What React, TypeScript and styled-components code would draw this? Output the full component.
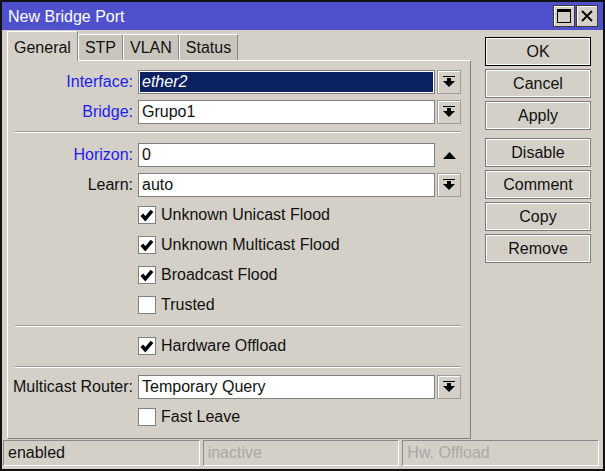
import styled, { createGlobalStyle } from 'styled-components';

const GlobalStyle = createGlobalStyle`
  html, body {
    margin: 0;
    padding: 0;
    background: #d4d0c8;
  }
  body {
    font-family: "Liberation Sans", Arial, sans-serif;
    font-size: 16px;
    color: #111;
  }
  * {
    box-sizing: border-box;
  }
`;

/** window frame **/
const Window = styled.div`
  width: 605px;
  height: 471px;
  border: 2px solid #111;
  background: #d4d0c8;
  display: flex;
  flex-direction: column;
`;

const TitleBar = styled.div`
  height: 28px;
  flex: 0 0 auto;
  background: #4f50cb;
  color: #fff;
  display: flex;
  align-items: center;
  padding: 0 5px 0 6px;
`;

const Title = styled.div`
  flex: 1;
  font-size: 16px;
  padding-top: 1px;
`;

const TitleButtons = styled.div`
  display: flex;
  gap: 1px;
`;

const TitleButton = styled.div`
  width: 22px;
  height: 22px;
  border: 1px solid #3a3a3a;
  background: #d4d0c8;
  box-shadow: inset 1px 1px 0 #fff;
  display: flex;
  align-items: center;
  justify-content: center;
`;

const Body = styled.div`
  flex: 1;
  display: flex;
  padding: 1px 0 0 5px;
  min-height: 0;
`;

/** left side: tabs and form **/
const LeftCol = styled.div`
  width: 464px;
  display: flex;
  flex-direction: column;
`;

const Tabs = styled.div`
  height: 29px;
  display: flex;
  align-items: flex-end;
`;

const Tab = styled.div<{ $active?: boolean }>`
  height: ${({ $active }) => ($active ? '30px' : '26px')};
  margin-bottom: ${({ $active }) => ($active ? '-1px' : '0')};
  position: relative;
  z-index: ${({ $active }) => ($active ? 1 : 0)};
  padding: ${({ $active }) => ($active ? '2px 6px 0' : '0 6px')};
  display: flex;
  align-items: center;
  background: ${({ $active }) => ($active ? '#d4d0c8' : '#c9c5bd')};
  border-top: 1px solid #fff;
  border-left: 1px solid #fff;
  border-right: 1px solid #8a8a8a;
  font-size: 16px;
`;

const Panel = styled.div`
  flex: 1;
  border-top: 1px solid #fff;
  border-left: 1px solid #fff;
  border-right: 1px solid #808080;
  border-bottom: 1px solid #808080;
  padding: 6px 9px 0 0;
  display: flex;
  flex-direction: column;
`;

const Row = styled.div`
  height: 30px;
  display: grid;
  grid-template-columns: 130px 297px 26px;
  align-items: center;
`;

const Label = styled.div<{ $link?: boolean }>`
  text-align: right;
  padding-right: 5px;
  white-space: nowrap;
  color: ${({ $link }) => ($link ? '#1c1cf0' : '#111')};
`;

const Field = styled.div<{ $selected?: boolean }>`
  height: 24px;
  border: 1px solid #808080;
  background: ${({ $selected }) => ($selected ? '#0b2161' : '#fff')};
  box-shadow: ${({ $selected }) => ($selected ? 'inset 0 0 0 1px #fff' : 'none')};
  color: ${({ $selected }) => ($selected ? '#fff' : '#111')};
  font-style: ${({ $selected }) => ($selected ? 'italic' : 'normal')};
  padding-left: 3px;
  display: flex;
  align-items: center;
  white-space: nowrap;
  overflow: hidden;
`;

const DropButton = styled.div`
  justify-self: end;
  width: 24px;
  height: 24px;
  border: 1px solid #9c9c9c;
  box-shadow: inset 1px 1px 0 #fff;
  display: flex;
  align-items: center;
  justify-content: center;
`;

const Spinner = styled.div`
  justify-self: end;
  width: 24px;
  height: 24px;
  display: flex;
  align-items: center;
  justify-content: center;
`;

const CheckCell = styled.div`
  grid-column: 2 / span 2;
  display: flex;
  align-items: center;
  gap: 5px;
  white-space: nowrap;
`;

const Box = styled.div`
  width: 18px;
  height: 18px;
  border: 1px solid #808080;
  background: #fff;
  display: flex;
  align-items: center;
  justify-content: center;
`;

const Separator = styled.div<{ $top: number; $bottom: number }>`
  margin: ${({ $top, $bottom }) => `${$top}px 0 ${$bottom}px 7px`};
  border-top: 1px solid #a09c94;
  border-bottom: 1px solid #fff;
`;

/** right side: buttons **/
const ButtonCol = styled.div`
  width: 106px;
  margin-left: 14px;
  padding-top: 6px;
  display: flex;
  flex-direction: column;
`;

const Button = styled.div<{ $default?: boolean; $spaced?: boolean }>`
  height: 29px;
  margin-top: ${({ $spaced }) => ($spaced ? '8px' : '3px')};
  border: 1px solid ${({ $default }) => ($default ? '#000' : '#7c7c7c')};
  box-shadow: inset 0 0 0 1px #fff;
  display: flex;
  align-items: center;
  justify-content: center;
  font-size: 16px;
  &:first-child {
    margin-top: 0;
  }
`;

/** status bar **/
const StatusBar = styled.div`
  height: 30px;
  flex: 0 0 auto;
  padding: 1px 4px 3px 1px;
  display: grid;
  grid-template-columns: 1fr 1fr 1fr;
  gap: 3px;
`;

const StatusCell = styled.div<{ $dim?: boolean }>`
  border-top: 1px solid #8a8a8a;
  border-left: 1px solid #8a8a8a;
  border-bottom: 1px solid #fff;
  border-right: 1px solid #fff;
  padding-left: 4px;
  display: flex;
  align-items: center;
  color: ${({ $dim }) => ($dim ? '#aaa8a2' : '#111')};
`;

function DropIcon() {
  return (
    <svg width="12" height="12" viewBox="0 0 12 12">
      <rect x="0" y="0" width="12" height="1" fill="#000" />
      <rect x="4" y="2" width="4" height="4" fill="#000" />
      <polygon points="0,5 12,5 6,11" fill="#000" />
    </svg>
  );
}

function UpIcon() {
  return (
    <svg width="13" height="7" viewBox="0 0 13 7">
      <polygon points="0,7 13,7 6.5,0" fill="#000" />
    </svg>
  );
}

function CheckMark() {
  return (
    <svg width="14" height="14" viewBox="0 0 14 14">
      <polyline points="1.8,6.8 5.3,10.8 12,2.8" fill="none" stroke="#000" strokeWidth="3.6" />
    </svg>
  );
}

function Check({ checked, label }: { checked?: boolean; label: string }) {
  return (
    <Row>
      <span />
      <CheckCell>
        <Box>{checked && <CheckMark />}</Box>
        {label}
      </CheckCell>
    </Row>
  );
}

function Select({ label, value, link, selected }: { label: string; value: string; link?: boolean; selected?: boolean }) {
  return (
    <Row>
      <Label $link={link}>{label}:</Label>
      <Field $selected={selected}>{value}</Field>
      <DropButton>
        <DropIcon />
      </DropButton>
    </Row>
  );
}

export default function App() {
  return (
    <>
      <GlobalStyle />
      <Window>
        <TitleBar>
          <Title>New Bridge Port</Title>
          <TitleButtons>
            <TitleButton>
              <svg width="14" height="14" viewBox="0 0 14 14">
                <rect x="0.5" y="0.5" width="13" height="13" fill="none" stroke="#000" />
                <rect x="0" y="0" width="14" height="3" fill="#000" />
              </svg>
            </TitleButton>
            <TitleButton>
              <svg width="12" height="12" viewBox="0 0 12 12">
                <path d="M1 1 L11 11 M11 1 L1 11" stroke="#000" strokeWidth="1.8" />
              </svg>
            </TitleButton>
          </TitleButtons>
        </TitleBar>
        <Body>
          <LeftCol>
            <Tabs>
              <Tab $active>General</Tab>
              <Tab>STP</Tab>
              <Tab>VLAN</Tab>
              <Tab>Status</Tab>
            </Tabs>
            <Panel>
              <Select label="Interface" value="ether2" link selected />
              <Select label="Bridge" value="Grupo1" link />
              <Separator $top={4} $bottom={7} />
              <Row>
                <Label $link>Horizon:</Label>
                <Field>0</Field>
                <Spinner>
                  <UpIcon />
                </Spinner>
              </Row>
              <Select label="Learn" value="auto" />
              <Check checked label="Unknown Unicast Flood" />
              <Check checked label="Unknown Multicast Flood" />
              <Check checked label="Broadcast Flood" />
              <Check label="Trusted" />
              <Separator $top={5} $bottom={4} />
              <Check checked label="Hardware Offload" />
              <Separator $top={5} $bottom={4} />
              <Select label="Multicast Router" value="Temporary Query" />
              <Check label="Fast Leave" />
            </Panel>
          </LeftCol>
          <ButtonCol>
            <Button $default>OK</Button>
            <Button>Cancel</Button>
            <Button>Apply</Button>
            <Button $spaced>Disable</Button>
            <Button>Comment</Button>
            <Button>Copy</Button>
            <Button>Remove</Button>
          </ButtonCol>
        </Body>
        <StatusBar>
          <StatusCell>enabled</StatusCell>
          <StatusCell $dim>inactive</StatusCell>
          <StatusCell $dim>Hw. Offload</StatusCell>
        </StatusBar>
      </Window>
    </>
  );
}
